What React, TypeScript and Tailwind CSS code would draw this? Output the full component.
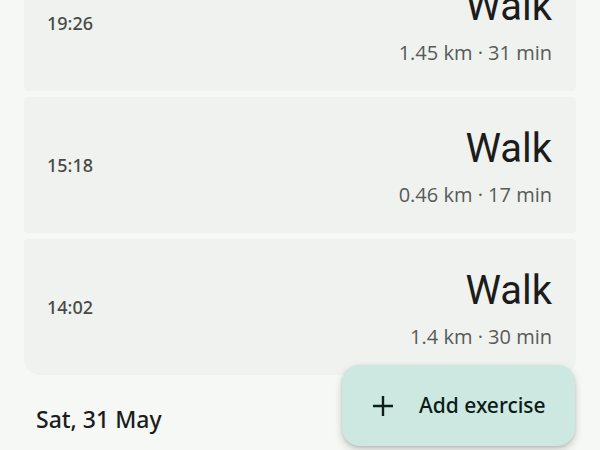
const sessions = [
  { time: "19:26", name: "Walk", detail: "1.45 km · 31 min", last: false },
  { time: "15:18", name: "Walk", detail: "0.46 km · 17 min", last: false },
  { time: "14:02", name: "Walk", detail: "1.4 km · 30 min", last: true },
];

function PlusIcon() {
  return (
    <svg width="22" height="22" viewBox="0 0 22 22" fill="none">
      <path d="M11 1v20M1 11h20" stroke="#0e1f1b" strokeWidth="2.4" />
    </svg>
  );
}

export default function App() {
  return (
    <div className="relative h-[450px] w-[600px] overflow-hidden bg-[#f6f8f5] font-['Open_Sans',Roboto,sans-serif]">
      <div className="-mt-[45px] flex flex-col gap-[6px] px-6">
        {sessions.map((s, i) => (
          <div
            key={i}
            className={`flex h-[136px] items-center justify-between bg-[#f0f2ef] pl-[23px] pr-6 ${
              s.last ? "rounded-t-[4px] rounded-b-[16px]" : "rounded-[4px]"
            }`}
          >
            <span className="font-['Noto_Sans',sans-serif] text-[18px] font-medium leading-6 text-[#464a47]">
              {s.time}
            </span>
            <div className="flex flex-col items-end gap-[8px] pt-1">
              <span className="font-[Roboto,sans-serif] text-[40px] leading-[48px] text-[#1b1c1b]">{s.name}</span>
              <span className="text-[20px] leading-7 text-[#575b58]">{s.detail}</span>
            </div>
          </div>
        ))}
      </div>

      <div className="px-9 pt-[30px] font-['Noto_Sans',sans-serif] text-[23px] font-medium leading-7 text-[#1b1c1b]">
        Sat, 31 May
      </div>

      <button className="absolute bottom-[4px] right-[25px] flex h-[81px] w-[233px] items-center gap-[25px] rounded-[18px] bg-[#cde8e1] pl-[30px] font-['Noto_Sans',sans-serif] text-[21px] font-medium text-[#0b1c18] shadow-[0_4px_8px_rgba(0,0,0,0.18),0_1px_3px_rgba(0,0,0,0.12)]">
        <PlusIcon />
        <span>Add exercise</span>
      </button>
    </div>
  );
}
